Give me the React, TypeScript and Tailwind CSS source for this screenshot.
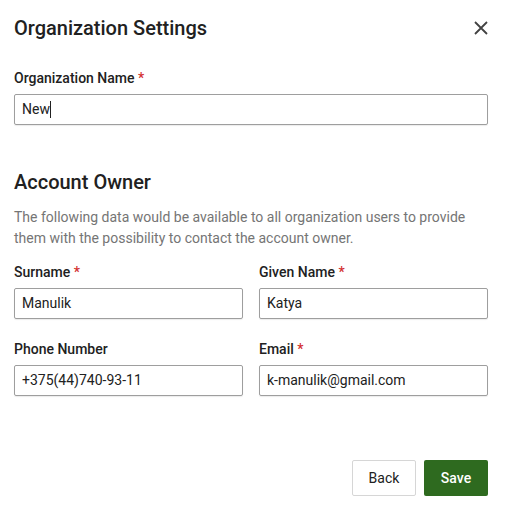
import React from "react";

function Label({ text, req }: { text: string; req?: boolean }) {
  return (
    <div className="text-[14px] leading-[20px] font-medium text-[#212121] mb-[6px]">
      {text}
      {req && <span className="text-[#d32f2f]"> *</span>}
    </div>
  );
}

function Field({ value }: { value: string }) {
  return (
    <div className="h-[31px] border border-[#9e9e9e] rounded-[2px] px-[7px] flex items-center text-[14px] text-[#212121] shadow-[0_1px_1px_rgba(0,0,0,0.08)]">
      {value}
    </div>
  );
}

export default function App() {
  return (
    <div className="w-[508px] h-[512px] bg-white pl-[14px] pr-[20px] pt-[15px] font-['Roboto',sans-serif] text-[#212121] flex flex-col">
      <div className="flex items-center justify-between h-[26px]">
        <h1 className="text-[20px] font-medium text-[#212121]">Organization Settings</h1>
        <svg width="14" height="14" viewBox="0 0 14 14">
          <path d="M1 1L13 13M13 1L1 13" stroke="#424242" strokeWidth="1.8" />
        </svg>
      </div>
      <div className="mt-[27px]">
        <Label text="Organization Name" req />
        <div className="h-[31px] border border-[#9e9e9e] rounded-[2px] px-[7px] flex items-center text-[14px] text-[#212121] shadow-[0_1px_1px_rgba(0,0,0,0.08)]">
          New<span className="inline-block w-[1px] h-[17px] bg-[#212121]" />
        </div>
      </div>
      <h2 className="mt-[44px] text-[20px] leading-[26px] font-medium text-[#212121]">Account Owner</h2>
      <p className="mt-[12px] text-[14px] leading-[21px] text-[#757575]">
        The following data would be available to all organization users to provide them with the possibility to contact the account owner.
      </p>
      <div className="mt-[13px] grid grid-cols-2 gap-x-[16px] gap-y-[20px]">
        <div>
          <Label text="Surname" req />
          <Field value="Manulik" />
        </div>
        <div>
          <Label text="Given Name" req />
          <Field value="Katya" />
        </div>
        <div>
          <Label text="Phone Number" />
          <Field value="+375(44)740-93-11" />
        </div>
        <div>
          <Label text="Email" req />
          <Field value="k-manulik@gmail.com" />
        </div>
      </div>
      <div className="mt-[64px] flex justify-end gap-[8px]">
        <button className="w-[64px] h-[36px] border border-[#d6d6d6] rounded-[2px] bg-white text-[14px] text-[#212121]">Back</button>
        <button className="w-[64px] h-[36px] rounded-[2px] bg-[#2e6a1f] text-white text-[14px] font-medium">Save</button>
      </div>
    </div>
  );
}
